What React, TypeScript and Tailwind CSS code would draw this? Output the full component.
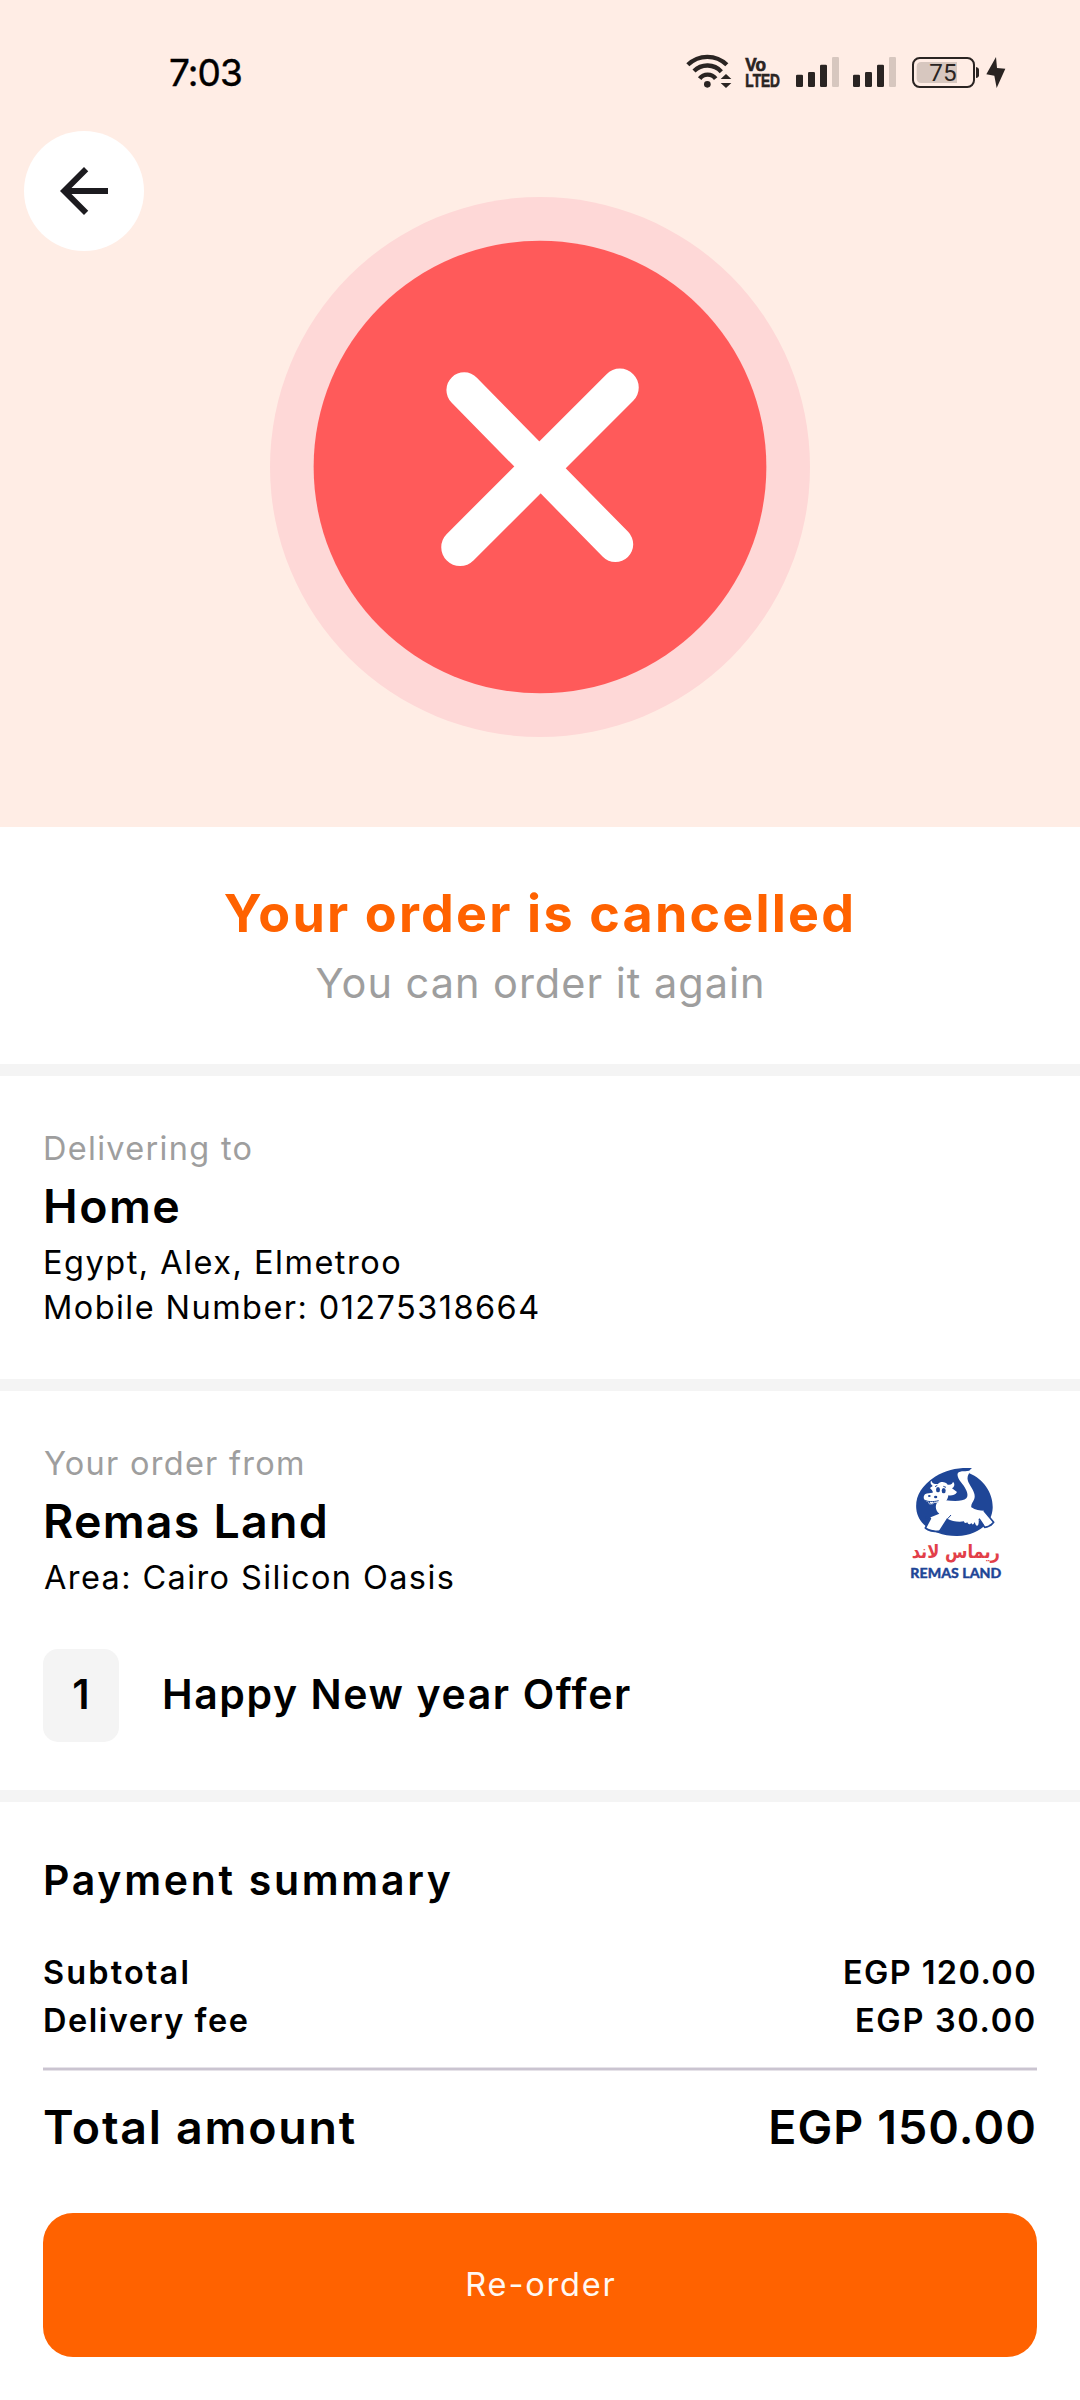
import React from "react";

const INK = "#2a2422";

function WifiIcon() {
  return (
    <svg className="h-[36px] w-[46px]" viewBox="78 69 138 108" fill="none" stroke={INK} strokeWidth="13">
      <path d="M83.500 104.500A83 83 0 0 1 200.500 104.500" />
      <path d="M102 123A57 57 0 0 1 184 125" />
      <path d="M119 146A30 30 0 0 1 167 146" />
      <circle cx="142" cy="163" r="10" fill={INK} stroke="none" />
      <path d="M198 132L214 147H182ZM182 159H214L198 174Z" fill={INK} stroke="none" />
    </svg>
  );
}

function VolteIcon() {
  return (
    <svg className="ml-[12px] h-[36px] w-[38px] overflow-visible" viewBox="252 69 114 108" fill={INK} stroke={INK} strokeWidth="2">
      <text x="256" y="122" fontFamily="Liberation Sans" fontWeight="700" fontSize="54" textLength="62" lengthAdjust="spacingAndGlyphs">Vo</text>
      <text x="256" y="170" fontFamily="Liberation Sans" fontWeight="700" fontSize="57" textLength="104" lengthAdjust="spacingAndGlyphs">LTED</text>
    </svg>
  );
}

function SignalIcon({ className }: { className: string }) {
  return (
    <svg className={className} viewBox="405 69 135 108" fill={INK}>
      <rect x="408" y="134" width="21" height="37" rx="4" />
      <rect x="444" y="126" width="21" height="45" rx="4" />
      <rect x="480" y="104" width="21" height="67" rx="4" />
      <rect x="516" y="81" width="21" height="90" rx="4" fill="#d7c7bf" />
    </svg>
  );
}

function BatteryIcon() {
  return (
    <svg className="ml-[14px] h-[36px] w-[69px]" viewBox="753 69 207 108" fill="none">
      <path d="M891 96H784Q770 96 770 110V145Q770 159 784 159H891Z" fill="#d7c7bf" />
      <rect x="759" y="84" width="183" height="87" rx="20" stroke={INK} strokeWidth="6" />
      <path d="M948 111Q957 113 957 120V136Q957 143 948 144Z" fill={INK} />
      <text x="808" y="154" fill={INK} fontFamily="Roboto" fontSize="73" textLength="82" lengthAdjust="spacingAndGlyphs">75</text>
    </svg>
  );
}

function BoltIcon() {
  return (
    <svg className="ml-[6px] h-[36px] w-[20px]" viewBox="978 69 60 108" fill={INK}>
      <path d="M1008 81L979 133L1003 137L1010 174L1036 116L1011 114Z" />
    </svg>
  );
}

function CancelledBadge() {
  return (
    <svg className="mt-[66px] size-[540px]" viewBox="54 45 1460 1460">
      <circle cx="784" cy="775" r="730" fill="#fed8d7" />
      <circle cx="784" cy="775" r="612" fill="#ff5a5a" />
      <g stroke="#fff" strokeLinecap="round">
        <path d="M579 567L988 984" strokeWidth="96" />
        <path d="M1000 560L568 992" strokeWidth="102" />
      </g>
    </svg>
  );
}

function RemasLogo() {
  return (
    <svg className="mr-[34px] mt-[24px] h-[120px] w-[93px] overflow-visible" viewBox="90 75 279 360">
      <path d="M276 84C235 82 200 88 165 110C122 138 105 172 109 208C114 258 170 289 232 288C290 286 336 254 338 205C340 162 312 118 268 100C266 94 270 89 276 84Z" fill="#1f4697" />
      {/* body, tail and legs */}
      <path d="M196 181C225 184 250 184 259 175C268 164 258 145 243 127C233 114 229 102 236 97C248 90 264 98 278 87C264 101 259 112 265 126C275 146 288 160 283 176C279 187 272 192 274 202C286 211 300 212 312 212L340 245C340 256 326 264 314 260C309 250 303 244 296 240C297 248 295 258 291 257C287 257 286 251 284 246C281 254 277 256 274 249C269 256 264 253 262 247C257 251 252 249 252 244C234 247 215 243 202 236L184 268C176 277 145 272 136 264L152 232L178 221C167 212 165 200 170 190Z" fill="#fff" />
      <path d="M137 232L151 236L136 264C146 272 160 275 178 275L203 236M297 236C302 242 308 252 314 262C324 261 334 256 341 247L312 212" fill="none" stroke="#1f4697" strokeWidth="5" strokeLinejoin="round" />
      <path d="M203 236L213 225" stroke="#1f4697" strokeWidth="3" />
      {/* head */}
      <path d="M158 138C151 132 150 126 154 122C158 132 166 133 174 132C182 122 198 126 203 134C214 136 218 130 219 125C226 132 223 141 216 145L231 156C226 166 212 168 205 166C204 180 194 190 182 189C172 190 164 186 160 192C152 197 144 192 145 186C130 184 128 170 135 163C142 158 150 160 158 158C160 152 152 148 150 144Z" fill="#fff" />
      <g fill="#1f4697">
        <ellipse cx="174" cy="149" rx="6" ry="8" />
        <ellipse cx="191" cy="152" rx="6" ry="8" />
        <ellipse cx="148" cy="168" rx="4" ry="3" />
        <ellipse cx="167" cy="171" rx="5" ry="4" />
      </g>
      <path d="M134 180C142 186 160 186 176 182M148 186C148 194 158 196 162 187M165 140L172 136M190 139L198 142" fill="none" stroke="#1f4697" strokeWidth="3" />
      <text x="95" y="355" direction="ltr" fill="#e23f49" fontFamily="DejaVu Sans, sans-serif" fontWeight="700" fontSize="56" textLength="265" lengthAdjust="spacingAndGlyphs">ريماس لاند</text>
      <text x="91" y="413" fill="#1f4697" stroke="#1f4697" strokeWidth="1" fontFamily="Lato" fontWeight="900" fontSize="41" textLength="273" lengthAdjust="spacingAndGlyphs">REMAS LAND</text>
    </svg>
  );
}

const Divider = () => <div className="h-[12px] bg-[#f4f4f4]" />;

export default function App() {
  return (
    <div className="h-[2400px] w-[1080px] overflow-hidden bg-white font-['Inter',sans-serif] text-black">
      <header className="h-[827px] bg-[#ffede5]">
        <div className="flex h-[131px] items-start justify-between pl-[169px] pr-[74px] pt-[53px]">
          <span className="text-[37px] leading-[39px] tracking-[-0.9px] [-webkit-text-stroke:0.4px_black]">7:03</span>
          <div className="flex">
            <WifiIcon />
            <VolteIcon />
            <SignalIcon className="ml-[13px] h-[36px] w-[45px]" />
            <SignalIcon className="ml-[12px] h-[36px] w-[45px]" />
            <BatteryIcon />
            <BoltIcon />
          </div>
        </div>
        <div className="grid grid-cols-[1fr_540px_1fr] items-start">
          <button className="ml-[24px] flex size-[120px] items-center justify-center rounded-full bg-white" aria-label="Back">
            <svg className="size-[72px]" viewBox="0 0 24 24" fill="#1c1b1f">
              <path d="M20 11H7.830l5.590-5.590L12 4l-8 8 8 8 1.410-1.410L7.830 13H20v-2z" />
            </svg>
          </button>
          <CancelledBadge />
        </div>
      </header>

      <section className="h-[237px] pt-[52px] text-center">
        <h1 className="text-[52px] font-bold leading-[70px] tracking-[2.2px] text-[#ff6200]">Your order is cancelled</h1>
        <p className="mt-[4px] pl-px text-[41.5px] leading-[60px] tracking-[0.98px] text-[#9e9e9e]">You can order it again</p>
      </section>
      <Divider />

      <section className="h-[303px] px-[43px] pt-[50px] text-[32.5px] leading-[45px]">
        <p className="leading-[46px] tracking-[1.3px] text-[#9e9e9e]">Delivering to</p>
        <h2 className="mb-[3px] mt-[3px] text-[46.5px] font-semibold leading-[62px] tracking-[1.5px]">Home</h2>
        <p className="tracking-[1.5px]">Egypt, Alex, Elmetroo</p>
        <p className="tracking-[1.43px]">Mobile Number: 01275318664</p>
      </section>
      <Divider />

      <section className="h-[399px] px-[43px] pt-[50px] text-[32.5px] leading-[45px]">
        <div className="flex h-[159px] items-start justify-between">
          <div>
            <p className="pl-px leading-[46px] tracking-[1.27px] text-[#9e9e9e]">Your order from</p>
            <h2 className="mb-[3px] mt-[3px] text-[46.5px] font-semibold leading-[62px] tracking-[1.25px]">Remas Land</h2>
            <p className="pl-px tracking-[1.39px]">Area: Cairo Silicon Oasis</p>
          </div>
          <RemasLogo />
        </div>
        <div className="mt-[49px] flex h-[93px] items-center gap-[43px] text-[41px] font-semibold">
          <span className="flex h-full w-[76px] items-center justify-center rounded-[15px] bg-[#f4f4f4] pb-[3px]">1</span>
          <span className="pb-[3px] tracking-[1.6px]">Happy New year Offer</span>
        </div>
      </section>
      <Divider />

      <section className="px-[43px] pt-[50px]">
        <h2 className="text-[41px] font-semibold leading-[56px] tracking-[2.7px]">Payment summary</h2>
        <div className="mt-[41px] text-[32.5px] font-semibold leading-[48px]">
          <div className="flex justify-between">
            <span className="tracking-[2.120px]">Subtotal</span>
            <span className="tracking-[1.4px]">EGP 120.00</span>
          </div>
          <div className="flex justify-between">
            <span className="tracking-[1.5px]">Delivery fee</span>
            <span className="tracking-[1.7px]">EGP 30.00</span>
          </div>
        </div>
        <div className="mt-[22px] h-[4px] border-y border-[#e6e3e9] bg-[#cac4d0]" />
        <div className="mt-[25px] flex justify-between text-[46.5px] font-semibold leading-[62px]">
          <span className="tracking-[1.75px]">Total amount</span>
          <span className="tracking-[1.1px]">EGP 150.00</span>
        </div>
        <button className="mt-[55px] block h-[144px] w-full rounded-[30px] bg-[#ff6200] pl-[2px] text-[32.5px] tracking-[1.85px] text-[#fff8f2]">Re-order</button>
      </section>
    </div>
  );
}
